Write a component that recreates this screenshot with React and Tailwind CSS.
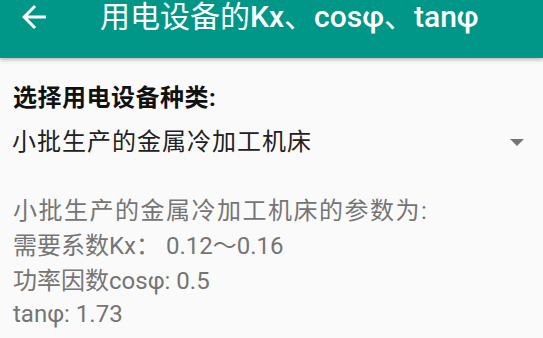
import React from 'react';

const font = { fontFamily: 'Roboto, "Noto Sans CJK SC", sans-serif' };

function BackArrow() {
  return (
    <svg width="36" height="36" viewBox="0 0 24 24" fill="white">
      <path d="M20 11H7.83l5.59-5.59L12 4l-8 8 8 8 1.41-1.41L7.83 13H20v-2z" />
    </svg>
  );
}

export default function App() {
  return (
    <div className="w-[543px] h-[338px] overflow-hidden bg-[#fafafa]" style={font}>
      {/* Toolbar */}
      <div className="h-[58px] bg-[#009688] flex items-start shadow-[0_2px_4px_rgba(0,0,0,0.25)] relative">
        <div className="ml-[16px] mt-[-1px]">
          <BackArrow />
        </div>
        <h1 className="ml-[48px] text-[30px] leading-[34px] font-normal text-white whitespace-nowrap">
          用电设备的<span className="font-medium">Kx</span>、<span className="font-medium">cosφ</span>、<span className="font-medium">tanφ</span>
        </h1>
      </div>

      {/* Content */}
      <div className="px-[13px] pt-[24px]">
        <p className="text-[24px] leading-[32px] font-bold text-[#111] tracking-[0.5px]">选择用电设备种类:</p>

        <div className="flex items-center justify-between mt-[12px] h-[32px]">
          <span className="text-[24px] leading-[32px] text-[#212121] -ml-[1px] tracking-[1px]">小批生产的金属冷加工机床</span>
          <svg width="16" height="10" viewBox="0 0 16 10" className="mr-[5px] mt-[2px]">
            <polygon points="1,1 15,1 8,8" fill="#757575" />
          </svg>
        </div>

        <div className="mt-[36px] text-[24px] text-[#757575] flex flex-col">
          <p className="leading-[35px] tracking-[1.5px]">小批生产的金属冷加工机床的参数为:</p>
          <p className="leading-[35px]">需要系数Kx： 0.12～0.16</p>
          <p className="leading-[35px]">功率因数cosφ: 0.5</p>
          <p className="leading-[31px]">tanφ: 1.73</p>
        </div>
      </div>
    </div>
  );
}
